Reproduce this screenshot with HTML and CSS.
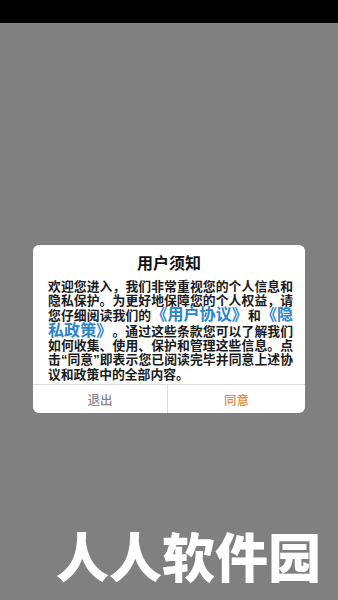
FILE: index.html
```html
<!DOCTYPE html>
<html lang="zh-CN">
<head>
<meta charset="utf-8">
<link rel="stylesheet" href="styles.css">
</head>
<body>
<div class="statusbar"></div>
<main class="screen">
  <section class="dialog">
    <h1 class="title">用户须知</h1>
    <p class="content">欢迎您进入，我们非常重视您的个人信息和隐私保护。为更好地保障您的个人权益，请您仔细阅读我们的<span class="link">《用户协议》</span>和<span class="link">《隐私政策》</span>。通过这些条款您可以了解我们如何收集、使用、保护和管理这些信息。点击<span class="quote">“</span>同意<span class="quote">”</span>即表示您已阅读完毕并同意上述协议和政策中的全部内容。</p>
    <div class="actions">
      <div class="btn btn-exit">退出</div>
      <div class="btn btn-agree">同意</div>
    </div>
  </section>
  <div class="watermark">人人软件园</div>
</main>
</body>
</html>
```
FILE: styles.css
```css
html, body {
  margin: 0;
  padding: 0;
}
body {
  width: 338px;
  height: 600px;
  overflow: hidden;
  background: #808080;
  font-family: "Noto Sans CJK SC", "Noto Sans", sans-serif;
  display: flex;
  flex-direction: column;
  text-spacing-trim: space-all;
}
.statusbar {
  height: 23px;
  background: #000;
  flex: none;
}
.screen {
  flex: 1;
  display: flex;
  flex-direction: column;
}
.dialog {
  margin: 222px 0 0 33px;
  width: 272px;
  background: #fff;
  border-radius: 6px;
  overflow: hidden;
  display: flex;
  flex-direction: column;
}
.title {
  margin: 0;
  padding-top: 7px;
  font-size: 16px;
  line-height: 20px;
  font-weight: bold;
  text-align: center;
  color: #111;
}
.content {
  margin: 7px 0 0 15px;
  width: 245px;
  padding-bottom: 3px;
  font-size: 12.8px;
  line-height: 14.2px;
  color: #1a1a1a;
  text-align: justify;
  font-weight: bold;
  text-spacing-trim: space-all;
}
.link {
  font-size: 16px;
  line-height: 12px;
  color: #2a84c6;
}
.quote {
  font-family: "Liberation Sans", sans-serif;
  font-weight: bold;
}
.actions {
  display: flex;
  border-top: 1px solid #dcdcdc;
  height: 28px;
}
.btn {
  flex: 1;
  display: flex;
  align-items: center;
  justify-content: center;
  font-size: 12.5px;
  font-weight: 500;
}
.btn-exit {
  color: #8a8a8a;
  border-right: 1px solid #dcdcdc;
  flex: 0 0 134px;
}
.btn-agree {
  color: #e38a3c;
}
.watermark {
  margin-top: 116px;
  padding-right: 17px;
  text-align: right;
  font-size: 53px;
  line-height: 53px;
  font-weight: 900;
  color: #fff;
}
```
